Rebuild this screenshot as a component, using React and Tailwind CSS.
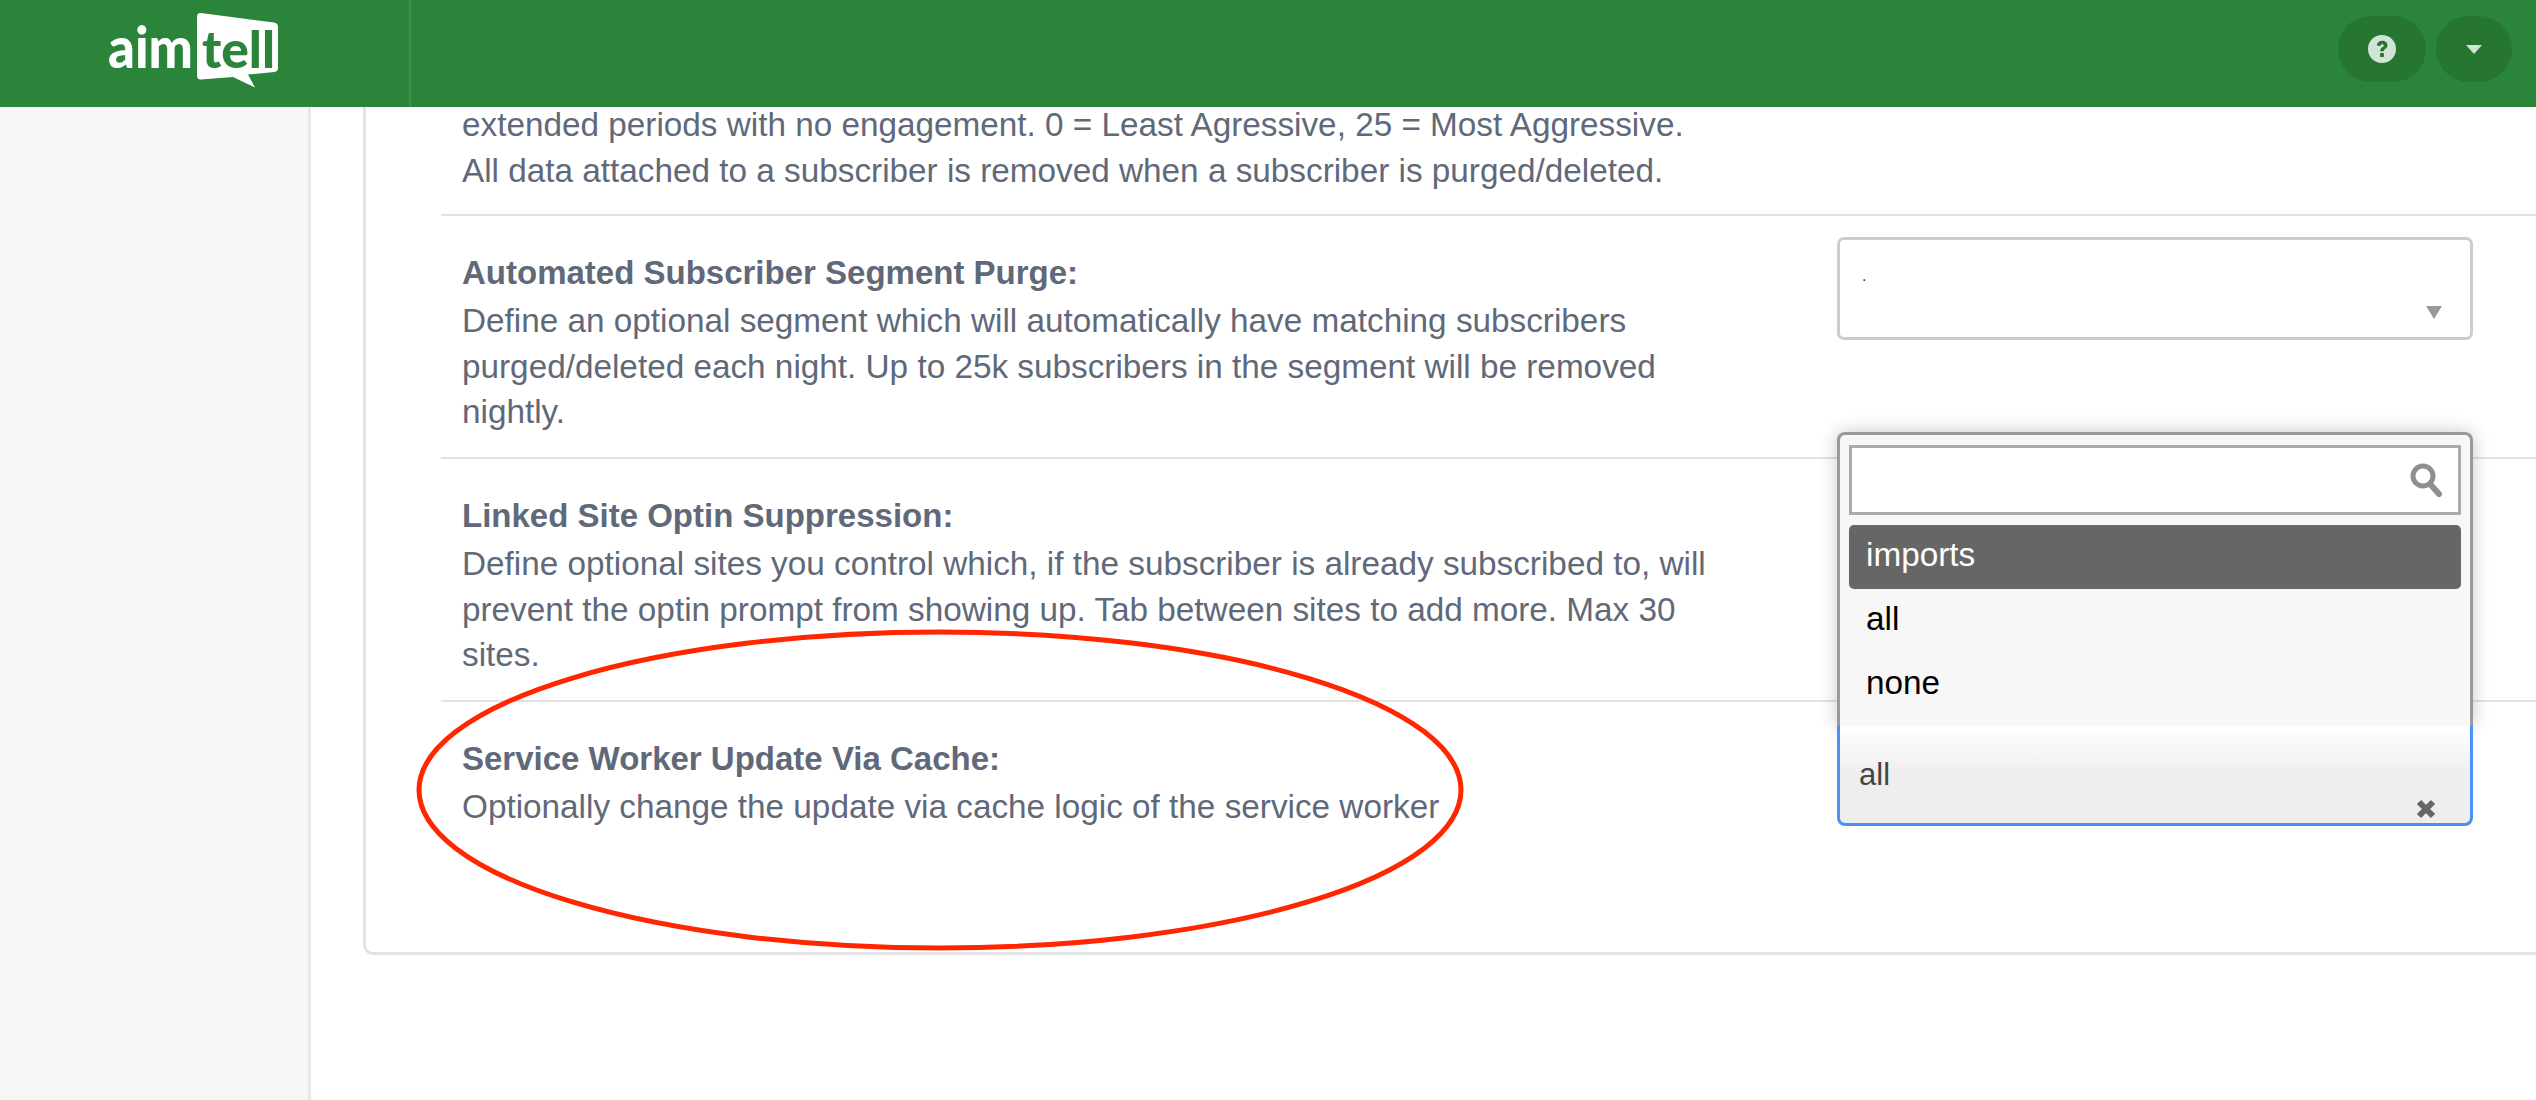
import React from "react";

const font = "font-['Liberation_Sans',Arial,sans-serif]";

function Logo() {
  return (
    <svg width="180" height="80" viewBox="105 10 180 80" className="shrink-0 overflow-visible" role="img" aria-label="aimtell">
      <path d="M201 13 L274 22.500 Q278 23 278 27 L278 68 Q278 71.500 274.500 72 L248 74.500 L255 87.500 L233 77 L201 79.500 Q197 80 197 75 L197 17 Q197 12.500 201 13 Z" fill="#ffffff" />
      <text x="108" y="67.500" textLength="85" lengthAdjust="spacingAndGlyphs" fontFamily="Lato,'Open Sans',sans-serif" fontWeight="900" fontSize="58" fill="#ffffff">aim</text>
      <text x="202" y="67.500" textLength="73" lengthAdjust="spacingAndGlyphs" fontFamily="Lato,'Open Sans',sans-serif" fontWeight="900" fontSize="52" fill="#2a843a">tell</text>
    </svg>
  );
}

function HelpIcon() {
  return (
    <svg width="28" height="28" viewBox="0 0 28 28" aria-hidden="true">
      <circle cx="14" cy="14" r="14" fill="#d1e5d5" />
      <path d="M8.800 10.600 C9 7.400 11.300 5.800 14.200 5.800 C17.200 5.800 19.500 7.500 19.500 10.300 C19.500 12.400 18.300 13.400 16.900 14.300 C16 14.900 15.800 15.300 15.800 16.300 L12.200 16.300 C12.200 14.300 12.800 13.200 14.200 12.300 C15.200 11.700 15.800 11.300 15.800 10.500 C15.800 9.700 15.100 9.200 14.200 9.200 C13.200 9.200 12.500 9.800 12.400 11 Z" fill="#267530" />
      <rect x="12.100" y="18" width="3.800" height="4" rx="0.500" fill="#267530" />
    </svg>
  );
}

function Row({ title, lines, last, children }) {
  return (
    <div className={last ? "flex pl-[21px] pt-[34px] pb-[22px]" : "flex border-b-2 border-[#e2e2e2] pl-[21px] pt-[34px] pb-[22px]"}>
      <div className="w-[1275px] shrink-0">
        <div className="mb-[2px] text-[33px] leading-[46px] font-bold text-[#5f6979]">{title}</div>
        <p className="text-[33.300px] leading-[45.600px] text-[#5f6979]">{lines}</p>
      </div>
      {children}
    </div>
  );
}

export default function App() {
  return (
    <div className={`${font} flex h-[1100px] w-[2536px] flex-col overflow-hidden bg-white`}>
      <header className="relative z-10 flex h-[107px] shrink-0 items-stretch bg-[#2a843a]">
        <div className="flex w-[411px] items-start border-r-2 border-[#3f9150] pl-[105px] pt-[10px]">
          <Logo />
        </div>
        <div className="ml-auto flex items-start gap-[10px] pr-[24px] pt-[16px]">
          <button className="flex h-[66px] w-[88px] items-center justify-center rounded-full bg-[#267530]">
            <HelpIcon />
          </button>
          <button className="flex h-[66px] w-[76px] items-center justify-center rounded-full bg-[#267530]">
            <span className="h-0 w-0 border-x-[8px] border-t-[9px] border-x-transparent border-t-[#d1e5d5]" />
          </button>
        </div>
      </header>

      <main className="flex min-h-0 flex-1">
        <aside className="w-[311px] shrink-0 border-r-[3px] border-[#e8e8e8] bg-[#f6f6f6]" />
        <div className="min-w-0 flex-1 pl-[52px]">
          <section className="-mt-[5px] h-[853px] w-[2300px] rounded-bl-[10px] border-b-[3px] border-l-[3px] border-[#e2e2e2] pl-[75px]">
            <div className="border-b-2 border-[#e2e2e2] pb-[21px] pl-[21px]">
              <p className="text-[33.300px] leading-[45.600px] text-[#5f6979]">
                extended periods with no engagement. 0 = Least Agressive, 25 = Most Aggressive.
                <br />
                All data attached to a subscriber is removed when a subscriber is purged/deleted.
              </p>
            </div>

            <Row
              title="Automated Subscriber Segment Purge:"
              lines="Define an optional segment which will automatically have matching subscribers purged/deleted each night. Up to 25k subscribers in the segment will be removed nightly."
            >
              <div className="relative -mt-[13px] ml-[100px] flex h-[103px] w-[636px] shrink-0 rounded-[7px] border-[3px] border-[#cccccc] pl-[22px] pt-[24px] text-[16px] leading-[24px] text-[#333333]">
                <span>.</span>
                <span className="absolute right-[28px] bottom-[18px] h-0 w-0 border-x-[8px] border-t-[13px] border-x-transparent border-t-[#999999]" />
              </div>
            </Row>

            <Row
              title="Linked Site Optin Suppression:"
              lines="Define optional sites you control which, if the subscriber is already subscribed to, will prevent the optin prompt from showing up. Tab between sites to add more. Max 30 sites."
            />

            <Row
              last
              title="Service Worker Update Via Cache:"
              lines="Optionally change the update via cache logic of the service worker"
            >
              <div className="relative -mt-[10px] ml-[100px] h-[100px] w-[636px] shrink-0">
                <div className="absolute bottom-full left-0 z-20 flex h-[294px] w-full flex-col rounded-t-[8px] border-x-[3px] border-t-[3px] border-[#999999] bg-[#f7f7f7] px-[9px] pt-[10px] shadow-[0_0_18px_rgba(0,0,0,0.22)]">
                  <div className="flex h-[70px] items-center justify-end border-[3px] border-[#aaaaaa] bg-white pr-[16px]">
                    <svg width="32" height="34" viewBox="0 0 32 34" aria-hidden="true">
                      <circle cx="13" cy="13" r="10" fill="none" stroke="#8f8f8f" strokeWidth="5" />
                      <path d="M20 21 L29 31" stroke="#8f8f8f" strokeWidth="6" strokeLinecap="round" />
                    </svg>
                  </div>
                  <div className="mt-[10px] flex h-[64px] items-center rounded-[5px] bg-[#666666] pb-[3px] pl-[17px] text-[33.300px] text-white">imports</div>
                  <div className="flex h-[64px] items-center pb-[3px] pl-[17px] text-[33.300px] text-black">all</div>
                  <div className="flex h-[64px] items-center pb-[3px] pl-[17px] text-[33.300px] text-black">none</div>
                </div>
                <div className="relative z-30 h-full rounded-b-[8px] border-x-[3px] border-b-[3px] border-[#4a90f5] bg-gradient-to-b from-[#ffffff] to-[#eeeeee] to-50% pl-[19px] pt-[27px] text-[31px] leading-[44px] text-[#444444]">
                  all
                  <svg className="absolute right-[33px] bottom-[3px]" width="22" height="22" viewBox="0 0 22 22" aria-hidden="true">
                    <path d="M4 4 L18 18 M18 4 L4 18" stroke="#666666" strokeWidth="6" />
                  </svg>
                </div>
              </div>
            </Row>
          </section>
        </div>
      </main>

      <svg className="pointer-events-none absolute left-[415px] top-[628px] z-40" width="1050" height="324" viewBox="0 0 1050 324" aria-hidden="true">
        <ellipse cx="525" cy="162" rx="521" ry="158" fill="none" stroke="#ff2600" strokeWidth="5" />
      </svg>
    </div>
  );
}
